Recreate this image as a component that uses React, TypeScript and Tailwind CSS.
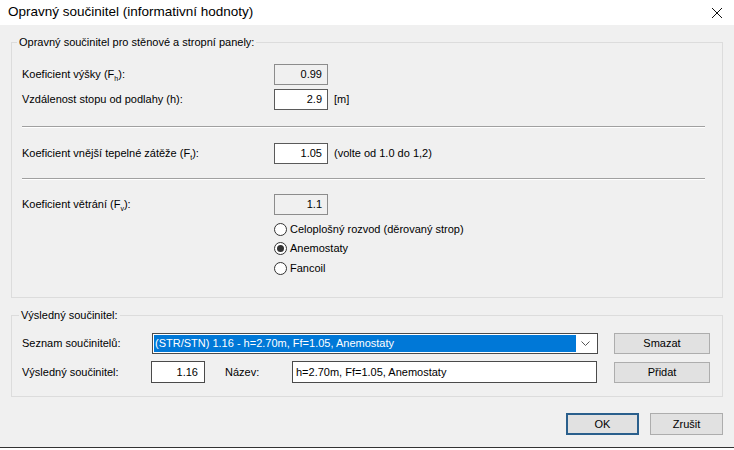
import React from 'react';

const F = ({ s }: { s: string }) => (
  <>
    F<span className="text-[7px] relative top-[3px]">{s}</span>
  </>
);

const Box = ({ value, ro }: { value: string; ro?: boolean }) => (
  <div
    className={`w-[54px] h-[21px] border flex items-center justify-end pr-[5px] ${
      ro ? 'bg-[#f0f0f0] border-[#8c8c8c]' : 'bg-white border-[#5a5a5a]'
    }`}
  >
    {value}
  </div>
);

const Radio = ({ label, checked, h }: { label: string; checked?: boolean; h: string }) => (
  <div className={`flex items-center gap-[3px] ${h}`}>
    <div className="w-[13px] h-[13px] rounded-full border border-[#333] bg-white flex items-center justify-center">
      {checked && <div className="w-[7px] h-[7px] rounded-full bg-[#333]" />}
    </div>
    <span>{label}</span>
  </div>
);

const Sep = () => <div className="mr-[17px] h-[2px] border-t border-[#a0a0a0] border-b border-b-white" />;

const Btn = ({ label, primary }: { label: string; primary?: boolean }) => (
  <button
    className={`w-[73px] h-[22px] flex items-center justify-center bg-[#e1e1e1] ${
      primary ? 'border-2 border-[#2a5f8c]' : 'border border-[#adadad]'
    }`}
  >
    {label}
  </button>
);

export default function App() {
  return (
    <div className="w-[734px] h-[450px] flex flex-col text-[11px] text-black font-['Liberation_Sans',Arial,sans-serif] overflow-hidden">
      <div className="h-[25px] bg-white flex items-center justify-between pl-[8px] pr-[11px]">
        <span className="text-[13.5px]">Opravný součinitel (informativní hodnoty)</span>
        <svg width="12" height="12" viewBox="0 0 12 12" stroke="#111" strokeWidth="1">
          <path d="M1 1L11 11M11 1L1 11" />
        </svg>
      </div>

      <div className="flex-1 bg-[#f0f0f0] px-[11px] flex flex-col">
        <div className="relative mt-[17px] h-[256px] border border-[#dcdcdc] pl-[10px] pt-[21px]">
          <span className="absolute -top-[8px] left-[5px] px-[2px] bg-[#f0f0f0] leading-[14px]">
            Opravný součinitel pro stěnové a stropní panely:
          </span>

          <div className="flex items-center h-[21px]">
            <span className="w-[252px]">
              Koeficient výšky (<F s="h" />):
            </span>
            <Box value="0.99" ro />
          </div>
          <div className="flex items-center h-[21px] mt-[4px]">
            <span className="w-[252px]">Vzdálenost stopu od podlahy (h):</span>
            <Box value="2.9" />
            <span className="ml-[6px]">[m]</span>
          </div>

          <div className="mt-[16px]">
            <Sep />
          </div>

          <div className="flex items-center h-[21px] mt-[15px]">
            <span className="w-[252px]">
              Koeficient vnější tepelné zátěže (<F s="t" />):
            </span>
            <Box value="1.05" />
            <span className="ml-[6px]">(volte od 1.0 do 1,2)</span>
          </div>

          <div className="mt-[14px]">
            <Sep />
          </div>

          <div className="flex items-center h-[21px] mt-[14px]">
            <span className="w-[252px]">
              Koeficient větrání (<F s="v" />):
            </span>
            <Box value="1.1" ro />
          </div>

          <div className="ml-[252px] mt-[4px] flex flex-col">
            <Radio label="Celoplošný rozvod (děrovaný strop)" h="h-[20px]" />
            <Radio label="Anemostaty" checked h="h-[19px]" />
            <Radio label="Fancoil" h="h-[20px]" />
          </div>
        </div>

        <div className="relative mt-[17px] border border-[#dcdcdc] pl-[10px] pr-[12px] pt-[17px] pb-[13px]">
          <span className="absolute -top-[8px] left-[7px] px-[2px] bg-[#f0f0f0] leading-[14px]">
            Výsledný součinitel:
          </span>

          <div className="flex items-center h-[21px]">
            <span className="w-[130px]">Seznam součinitelů:</span>
            <div className="w-[446px] h-[21px] bg-white border border-[#4a4a4a] flex items-center pl-[1px] pr-[2px]">
              <div className="flex-1 h-[17px] bg-[#0078d7] text-white flex items-center pl-[1px] whitespace-nowrap overflow-hidden">
                (STR/STN) 1.16 - h=2.70m, Ff=1.05, Anemostaty
              </div>
              <div className="w-[19px] flex justify-center">
                <svg width="9" height="6" viewBox="0 0 9 6" fill="none" stroke="#555" strokeWidth="1">
                  <path d="M0.5 0.5L4.5 4.5L8.5 0.5" />
                </svg>
              </div>
            </div>
            <div className="ml-auto">
              <button className="w-[96px] h-[21px] bg-[#e1e1e1] border border-[#adadad]">Smazat</button>
            </div>
          </div>

          <div className="flex items-center h-[22px] mt-[7px]">
            <span className="w-[129px]">Výsledný součinitel:</span>
            <div className="w-[54px] h-[22px] bg-white border border-[#4a4a4a] flex items-center justify-end pr-[6px]">
              1.16
            </div>
            <span className="ml-[20px] w-[67px]">Název:</span>
            <div className="w-[305px] h-[22px] bg-white border border-[#4a4a4a] flex items-center pl-[3px]">
              h=2.70m, Ff=1.05, Anemostaty
            </div>
            <div className="ml-auto">
              <button className="w-[96px] h-[21px] bg-[#e1e1e1] border border-[#adadad]">Přidat</button>
            </div>
          </div>
        </div>

        <div className="mt-[16px] flex justify-end gap-[11px]">
          <Btn label="OK" primary />
          <Btn label="Zrušit" />
        </div>
      </div>
      <div className="h-[3px] bg-white border-t border-[#333]" />
    </div>
  );
}
